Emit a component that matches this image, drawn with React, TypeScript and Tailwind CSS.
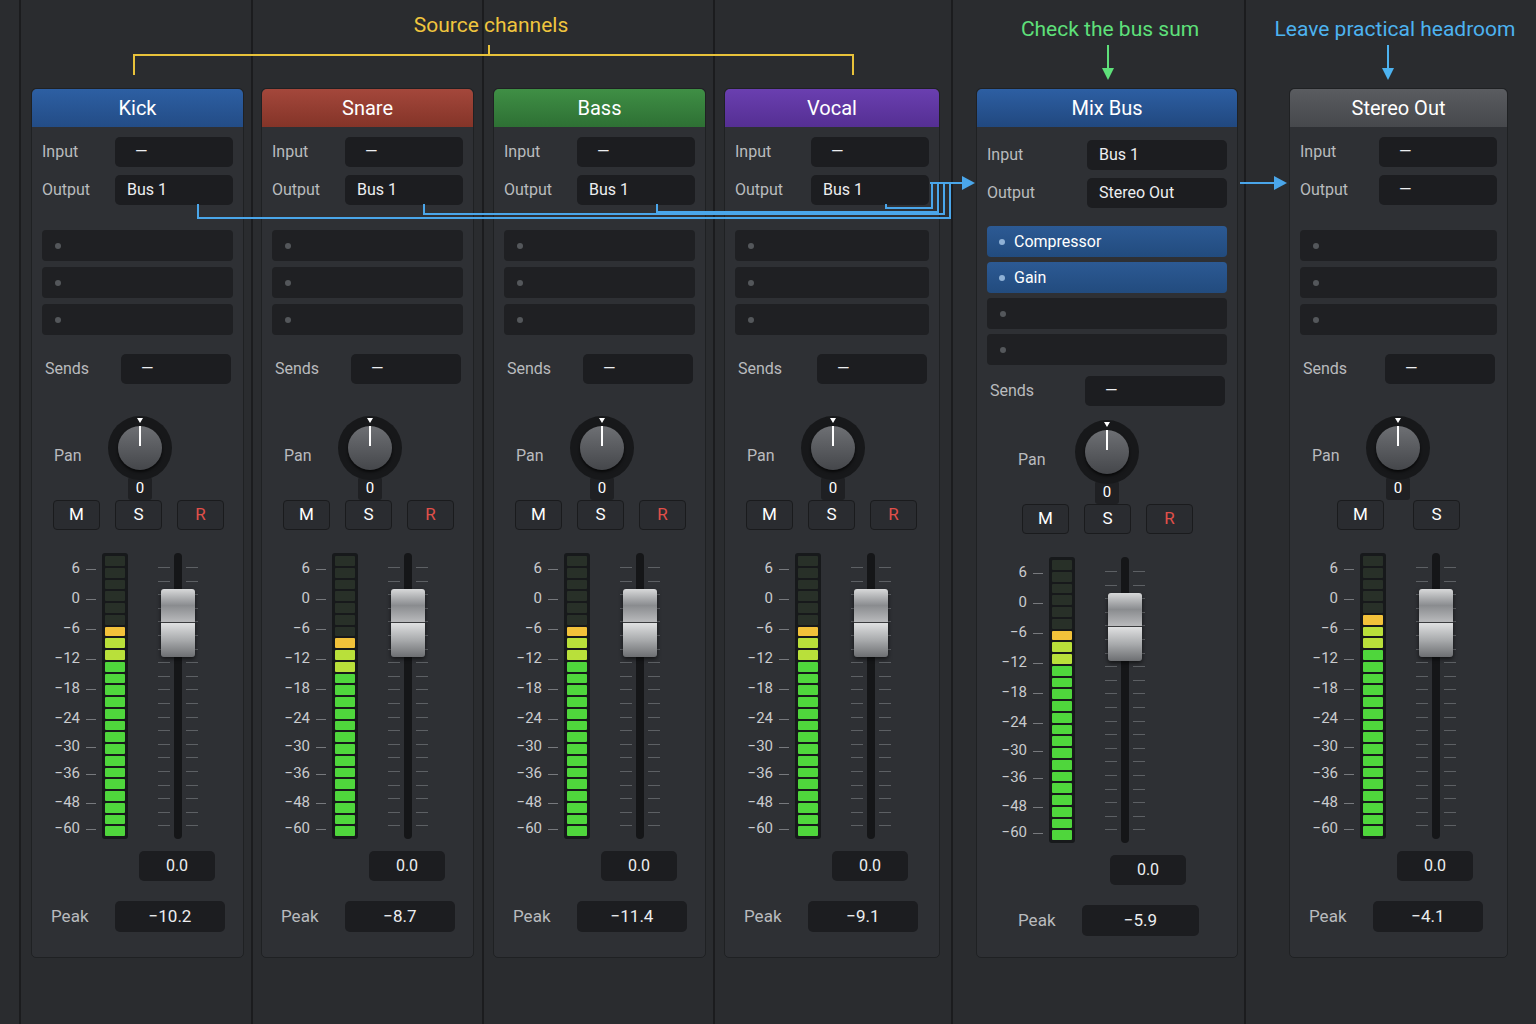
import React from "react";

type Strip = {
  name: string; header: string; ml: string; w: string; input: string; output: string;
  inserts: string[]; lit: number; peak: string; rec: boolean; bus?: boolean;
};

const strips: Strip[] = [
  { name: "Kick", header: "bg-gradient-to-b from-[#2d5fa3] to-[#234c86]", ml: "ml-[31px]", w: "w-[213px]", input: "—", output: "Bus 1", inserts: [], lit: 18, peak: "−10.2", rec: true },
  { name: "Snare", header: "bg-gradient-to-b from-[#a4473b] to-[#843428]", ml: "ml-[17px]", w: "w-[213px]", input: "—", output: "Bus 1", inserts: [], lit: 17, peak: "−8.7", rec: true },
  { name: "Bass", header: "bg-gradient-to-b from-[#3f8f45] to-[#2e7034]", ml: "ml-[19px]", w: "w-[213px]", input: "—", output: "Bus 1", inserts: [], lit: 18, peak: "−11.4", rec: true },
  { name: "Vocal", header: "bg-gradient-to-b from-[#6a3fb0] to-[#552f93]", ml: "ml-[18px]", w: "w-[216px]", input: "—", output: "Bus 1", inserts: [], lit: 18, peak: "−9.1", rec: true },
  { name: "Mix Bus", header: "bg-gradient-to-b from-[#2d5fa3] to-[#21487f]", ml: "ml-[36px]", w: "w-[262px]", input: "Bus 1", output: "Stereo Out", inserts: ["Compressor", "Gain"], lit: 18, peak: "−5.9", rec: true, bus: true },
  { name: "Stereo Out", header: "bg-gradient-to-b from-[#5a5c60] to-[#46484c]", ml: "ml-[51px]", w: "w-[219px]", input: "—", output: "—", inserts: [], lit: 19, peak: "−4.1", rec: false },
];

const scale = [
  ["6", 16], ["0", 46], ["−6", 76], ["−12", 106], ["−18", 136], ["−24", 166],
  ["−30", 194], ["−36", 221], ["−48", 250], ["−60", 276],
] as const;

function Meter({ lit }: { lit: number }) {
  const n = 24;
  const segs = Array.from({ length: n }, (_, i) => n - 1 - i);
  return (
    <div className="relative h-[286px] w-[150px]">
      {scale.map(([t, y]) => (
        <div key={t} className="absolute left-0 w-[48px] text-right text-[15px] leading-none text-[#c9cbce]" style={{ top: y - 8 }}>{t}</div>
      ))}
      {scale.map(([t, y]) => (
        <div key={"k" + t} className="absolute left-[54px] h-px w-[10px] bg-[#77797d]" style={{ top: y }} />
      ))}
      <div className="absolute left-[70px] top-0 flex h-[286px] w-[26px] flex-col gap-[2px] rounded-[3px] bg-[#17191b] p-[3px]">
        {segs.map((i) => {
          const on = i < lit;
          let c = "bg-[#283028]";
          if (on) c = i >= lit - 1 ? "bg-[#f2c23a]" : i >= lit - 3 ? "bg-[#b9e03a]" : "bg-[#4fd63c]";
          return <div key={i} className={`flex-1 rounded-[1px] ${c}`} />;
        })}
      </div>
      {Array.from({ length: 20 }, (_, i) => (
        <React.Fragment key={"f" + i}>
          <div className="absolute left-[126px] h-px w-[12px] bg-[#5d6064]" style={{ top: 14 + i * 13.6 }} />
          <div className="absolute left-[154px] h-px w-[12px] bg-[#5d6064]" style={{ top: 14 + i * 13.6 }} />
        </React.Fragment>
      ))}
      <div className="absolute left-[142px] top-0 h-[286px] w-[8px] rounded-full bg-[#151618]" />
      <div className="absolute left-[129px] top-[36px] flex w-[34px] flex-col overflow-hidden rounded-[3px] shadow-[0_2px_4px_rgba(0,0,0,0.6)]">
        <div className="h-[34px] border-b border-[#3a3b3d] bg-gradient-to-b from-[#d8d9da] via-[#8a8c8f] to-[#b9babc]" />
        <div className="h-[34px] bg-gradient-to-b from-[#e0e1e2] via-[#a9abad] to-[#6d6f72]" />
      </div>
    </div>
  );
}

function Box({ children, className = "" }: { children: React.ReactNode; className?: string }) {
  return <div className={`flex h-[30px] items-center rounded-[5px] bg-[#1c1d20] text-[16px] text-[#eceef0] ${className}`}>{children}</div>;
}

function StripView({ s }: { s: Strip }) {
  const slots = s.bus ? 4 : 3;
  const btn = "flex h-[30px] w-[47px] items-center justify-center rounded-[4px] border border-[#1a1b1d] bg-[#2a2c30] text-[17px]";
  return (
    <div className={`${s.ml} ${s.w} flex h-[870px] shrink-0 flex-col rounded-[5px] border border-[#1f2123] bg-[#2e3034]`}>
      <div className={`flex h-[38px] items-center justify-center rounded-t-[5px] text-[20px] text-white ${s.header}`}>{s.name}</div>
      <div className={`flex flex-col gap-[8px] px-[10px] ${s.bus ? "pt-[13px]" : "pt-[10px]"}`}>
        {[["Input", s.input], ["Output", s.output]].map(([l, v]) => (
          <div key={l} className="flex items-center justify-between">
            <span className="text-[16px] text-[#b9bbbe]">{l}</span>
            <Box className={`${s.bus ? "w-[140px]" : "w-[118px]"} ${v === "—" ? "pl-[20px] text-[#bbb]" : "pl-[12px]"}`}>{v}</Box>
          </div>
        ))}
      </div>
      <div className={`flex flex-col px-[10px] ${s.bus ? "gap-[5px] pt-[18px]" : "gap-[6px] pt-[25px]"}`}>
        {Array.from({ length: slots }, (_, i) => {
          const name = s.inserts[i];
          return name ? (
            <div key={i} className="flex h-[31px] items-center gap-[9px] rounded-[4px] bg-gradient-to-b from-[#2c5a94] to-[#224b7e] pl-[12px] text-[16px] text-white">
              <span className="h-[6px] w-[6px] rounded-full bg-[#8fb1d6]" />{name}
            </div>
          ) : (
            <div key={i} className="flex h-[31px] items-center rounded-[4px] bg-[#1f2023] pl-[13px]">
              <span className="h-[6px] w-[6px] rounded-full bg-[#54575b]" />
            </div>
          );
        })}
      </div>
      <div className={`flex items-center justify-between pl-[13px] pr-[12px] ${s.bus ? "pt-[11px]" : "pt-[19px]"}`}>
        <span className="text-[16px] text-[#b9bbbe]">Sends</span>
        <Box className={`${s.bus ? "w-[140px]" : "w-[110px]"} h-[30px] justify-start pl-[20px] text-[#bbb]`}>—</Box>
      </div>
      <div className={`relative flex h-[80px] items-start ${s.bus ? "mt-[14px]" : "mt-[32px]"}`}>
        <span className={`absolute top-[28px] text-[16px] text-[#b9bbbe] ${s.bus ? "left-[41px]" : "left-[22px]"}`}>Pan</span>
        <div className={`absolute top-0 flex flex-col items-center ${s.bus ? "left-[98px]" : "left-[76px]"}`}>
          <div className="relative flex h-[64px] w-[64px] items-center justify-center rounded-full bg-[#17181a]">
            <div className="h-[44px] w-[44px] rounded-full bg-gradient-to-b from-[#6e7074] to-[#45474b] shadow-[0_2px_3px_rgba(0,0,0,0.7)]" />
            <div className="absolute left-[31px] top-[10px] h-[20px] w-[2px] bg-white" />
            <div className="absolute left-[29px] top-[2px] h-0 w-0 border-x-[3px] border-t-[5px] border-x-transparent border-t-white" />
          </div>
          <div className="-mt-[3px] rounded-[3px] bg-[#1f2023] px-[8px] text-[15px] text-white">0</div>
        </div>
      </div>
      <div className={`flex gap-[15px] ${s.rec ? (s.bus ? "pl-[45px]" : "pl-[21px]") : "justify-center gap-[29px]"} pt-[4px]`}>
        <div className={`${btn} text-white`}>M</div>
        <div className={`${btn} text-white`}>S</div>
        {s.rec && <div className={`${btn} text-[#e0504a]`}>R</div>}
      </div>
      <div className={`pt-[23px] ${s.bus ? "pl-[2px]" : s.name === "Stereo Out" ? "pl-[0px]" : "pl-[0px]"}`}>
        <Meter lit={s.lit} />
      </div>
      <div className={`mt-[12px] flex ${s.bus ? "pl-[133px]" : "pl-[107px]"}`}>
        <Box className="w-[76px] justify-center">0.0</Box>
      </div>
      <div className={`mt-[20px] flex items-center ${s.bus ? "pl-[41px]" : "pl-[19px]"}`}>
        <span className="w-[64px] text-[17px] text-[#b9bbbe]">Peak</span>
        <Box className={`${s.bus ? "w-[117px]" : "w-[110px]"} h-[31px] justify-center text-[17px]`}>{s.peak}</Box>
      </div>
    </div>
  );
}

export default function App() {
  const blue = "#4aa6ea";
  return (
    <div className="relative h-[1024px] w-[1536px] overflow-hidden bg-[#2a2c2f]" style={{ fontFamily: "Roboto, 'Noto Sans', sans-serif" }}>
      <div className="flex pt-[88px]">
        {strips.map((s) => <StripView key={s.name} s={s} />)}
      </div>
      <svg className="pointer-events-none absolute left-0 top-0" width={1536} height={1024}>
        {[20, 252, 483, 714, 952, 1245].map((x) => (
          <line key={x} x1={x} y1={0} x2={x} y2={1024} stroke="#1b1c1e" strokeWidth={2} />
        ))}
        <path d="M134 75 V55 H853 V75 M489 55 V45" stroke="#e8c23a" strokeWidth={2} fill="none" />
        <path d="M1108 45 V72" stroke="#5ee07a" strokeWidth={2} />
        <path d="M1102 68 L1108 80 L1114 68 Z" fill="#5ee07a" />
        <path d="M1388 45 V72" stroke="#4db3f0" strokeWidth={2} />
        <path d="M1382 68 L1388 80 L1394 68 Z" fill="#4db3f0" />
        <g stroke={blue} strokeWidth={2} fill="none">
          <path d="M198 204 V218 H950 V183" />
          <path d="M424 204 V214 H944 V183" />
          <path d="M657 204 V212 H938 V183" />
          <path d="M886 204 V208 H932 V183" />
          <path d="M930 183 H964" />
          <path d="M1240 183 H1276" />
        </g>
        <path d="M962 176 L975 183 L962 190 Z" fill={blue} />
        <path d="M1274 176 L1287 183 L1274 190 Z" fill={blue} />
      </svg>
      <div className="absolute left-[391px] top-[10px] w-[200px] text-center text-[21px] text-[#f0c53e]">Source channels</div>
      <div className="absolute left-[990px] top-[14px] w-[240px] text-center text-[21px] text-[#5ee07a]">Check the bus sum</div>
      <div className="absolute left-[1270px] top-[14px] w-[250px] text-center text-[21px] text-[#4db3f0]">Leave practical headroom</div>
    </div>
  );
}
